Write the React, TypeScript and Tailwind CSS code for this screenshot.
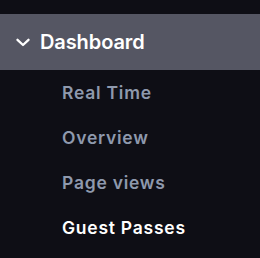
const items = [
  { label: "Real Time", active: false },
  { label: "Overview", active: false },
  { label: "Page views", active: false },
  { label: "Guest Passes", active: true },
];

export default function App() {
  return (
    <div
      className="w-[260px] h-[258px] bg-[#0e0e15] pt-[14px]"
      style={{ fontFamily: "Inter, 'Noto Sans', sans-serif" }}
    >
      {/* Section header */}
      <div className="flex items-center h-[56px] bg-[#555663] pl-[16px] gap-[10px]">
        <svg width="14" height="9" viewBox="0 0 14 9" fill="none" stroke="white" strokeWidth="2.3" strokeLinecap="round" strokeLinejoin="round">
          <path d="M1.5 1.8 7 7 12.5 1.8" />
        </svg>
        <span className="text-white text-[20px] font-semibold tracking-[-0.1px]">Dashboard</span>
      </div>

      {/* Sub items */}
      <ul className="pt-[1px]">
        {items.map((item) => (
          <li
            key={item.label}
            className={`flex items-center h-[45px] pl-[62px] text-[17.5px] font-semibold tracking-[0.75px] ${
              item.active ? "text-white" : "text-[#8e99ad]"
            }`}
          >
            {item.label}
          </li>
        ))}
      </ul>
    </div>
  );
}
